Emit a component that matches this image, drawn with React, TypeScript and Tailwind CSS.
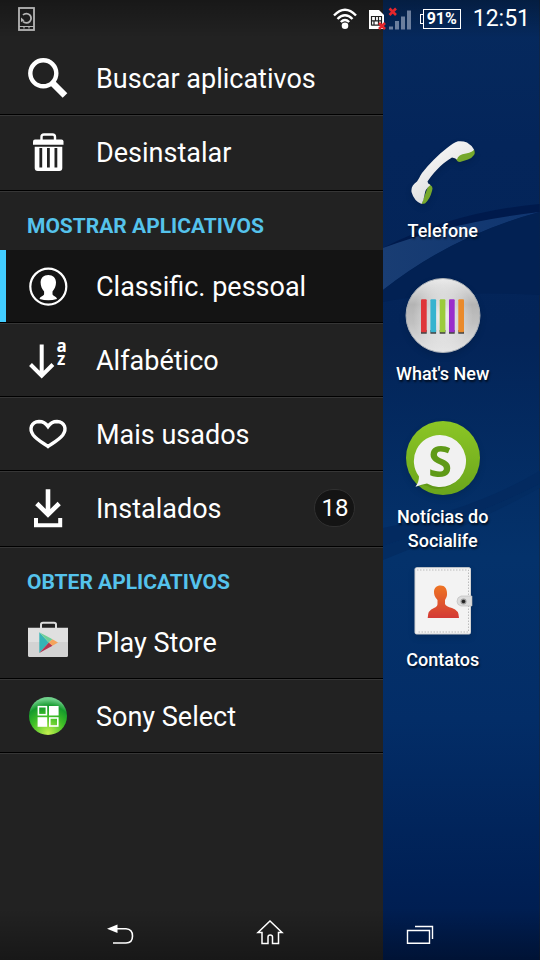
import React, { useState } from 'react';

const SearchIcon = () => (
  <svg viewBox="0 0 40 40" className="size-10 shrink-0" fill="none" stroke="#fff" aria-hidden="true">
    <circle cx="15.3" cy="15.3" r="13" strokeWidth="4.4" />
    <path d="M25 25.5 37 37.5" strokeWidth="6.5" />
  </svg>
);

const TrashIcon = () => (
  <svg viewBox="0 0 40 40" className="size-10 shrink-0" fill="#fff" aria-hidden="true">
    <path d="M13.5 8V5Q13.5 2.5 16 2.5H24.5Q27 2.5 27 5V8" fill="none" stroke="#fff" strokeWidth="2.4" />
    <path d="M5 12.8V9.5Q5 7.5 7 7.5H33.5Q35.5 7.5 35.5 9.5V12.8Z" />
    <path
      fillRule="evenodd"
      d="M6.7 14.7H34.3V36Q34.3 39 31.3 39H9.7Q6.7 39 6.7 36ZM11.4 16V35.5H14.2V16ZM19 16V35.5H21.8V16ZM26.5 16V35.5H29.3V16Z"
    />
  </svg>
);

const PersonIcon = () => (
  <svg viewBox="0 0 40 40" className="size-10 shrink-0" fill="#fff" aria-hidden="true">
    <circle cx="20.3" cy="20.6" r="18" fill="none" stroke="#fff" strokeWidth="2.2" />
    <path d="M20.3 9C25 9 28 12 28 16.5C28 20 26.5 23 24.5 25.5V28C24.5 30 28.5 30 29 33Q20.3 35.5 11.6 33C12 30 16.1 30 16.1 28V25.5C14 23 12.6 20 12.6 16.5C12.6 12 15.6 9 20.3 9Z" />
  </svg>
);

const SortIcon = () => (
  <svg viewBox="0 0 40 40" className="size-10 shrink-0 overflow-visible" fill="none" stroke="#fff" aria-hidden="true">
    <path d="M13.7 4.5V35M2.5 24.5 13.7 35.7 24.9 24.5" strokeWidth="4" />
    <g fill="#fff" stroke="none" fontFamily="Open Sans, sans-serif" fontWeight="700" fontSize="17">
      <text x="28.5" y="11.5">a</text>
      <text x="29" y="24.7">z</text>
    </g>
  </svg>
);

const HeartIcon = () => (
  <svg viewBox="0 0 40 40" className="size-10 shrink-0" fill="none" stroke="#fff" strokeWidth="3.4" aria-hidden="true">
    <path d="M20 32.5C16 29.5 9 26 5.2 21C1 15 3 8 11 7.5C15 7.5 18 9.5 20 12.5C22 9.5 25 7.5 29 7.5C37 8 39 15 34.8 21C31 26 24 29.5 20 32.5Z" />
  </svg>
);

const DownloadIcon = () => (
  <svg viewBox="0 0 40 40" className="size-10 shrink-0" fill="none" stroke="#fff" aria-hidden="true">
    <path d="M20 1.3V26M8.8 15.5 20 26.5 31.2 15.5" strokeWidth="4.6" />
    <path d="M8 30V37.3H32.2V30" strokeWidth="4" />
  </svg>
);

const PlayStoreIcon = () => (
  <svg viewBox="0 0 40 40" className="size-10 shrink-0 overflow-visible" aria-hidden="true">
    <path d="M13 6V2.5Q13 .7 15 .7H26Q28 .7 28 2.5V6" fill="none" stroke="#ddd" strokeWidth="2" />
    <path d="M0 5.7H40V33Q40 35 38 35H2Q0 35 0 33Z" fill="#e0e0e0" />
    <path d="M0 20H40V33Q40 35 38 35H2Q0 35 0 33Z" fill="#d3d3d3" />
    <path d="M11.3 10.3 20.8 20.5 11.3 31Z" fill="#35b3b5" />
    <path d="M11.3 10.3 24.5 17.3 20.8 20.5Z" fill="#6fcf97" />
    <path d="M11.3 31 20.8 20.5 24.5 23.8Z" fill="#b5344f" />
    <path d="M24.5 17.3 30 20.5 24.5 23.8 20.8 20.5Z" fill="#f5a35c" />
  </svg>
);

const SonySelectIcon = () => (
  <svg viewBox="0 0 40 40" className="size-10 shrink-0" aria-hidden="true">
    <defs>
      <radialGradient id="select-ball" cx=".5" cy=".95" r=".9">
        <stop offset="0" stopColor="#c4f04e" />
        <stop offset=".5" stopColor="#3fbf26" />
        <stop offset=".8" stopColor="#159a2c" />
        <stop offset="1" stopColor="#6fd08a" />
      </radialGradient>
    </defs>
    <circle cx="20" cy="20" r="19" fill="url(#select-ball)" />
    <g fill="none" stroke="#fff" strokeWidth="1.6">
      <rect x="10.4" y="10.7" width="8" height="8" />
      <rect x="21.8" y="22" width="8" height="8" />
    </g>
    <g fill="#fff">
      <rect x="21" y="10" width="9.6" height="9.5" />
      <rect x="9.6" y="21.2" width="9.6" height="9.6" />
    </g>
  </svg>
);

const PhoneIcon = () => (
  <svg viewBox="0 0 80 80" className="size-20 shrink-0 drop-shadow-md" aria-hidden="true">
    <defs>
      <linearGradient id="handset" x1="0" y1="0" x2=".6" y2="1">
        <stop offset="0" stopColor="#fff" />
        <stop offset=".5" stopColor="#ececec" />
        <stop offset="1" stopColor="#d5d8da" />
      </linearGradient>
    </defs>
    <path d="M55 21 71 16.5Q72.500 20 71 22Q69 25 65 26.500L57 29Q53.500 29 53 25Z" fill="#76a82c" />
    <path d="M26 51 29 53.500Q30 55 29 58Q27 66 22 70.500L18.500 71Z" fill="#76a82c" />
    <path
      d="M8.500 59C8 54 10 51.500 14 48.500C16 46 16.500 43.500 19 40C26 31 35 22 44 15Q50 10 55 8.300Q60 7.800 64 9.500Q69 12.500 71 16.500Q70 19 63 20.500Q55 21.500 54 26.500Q52 25 49 24.500C42 28.500 33 36 24.500 48.500Q24.500 50.500 27.500 52Q22 56 21.500 62Q20.500 68 18.500 71Q11 68 8.500 59Z"
      fill="url(#handset)"
    />
  </svg>
);

const WhatsNewIcon = () => (
  <svg viewBox="0 0 80 80" className="size-20 shrink-0 drop-shadow-md" aria-hidden="true">
    <defs>
      <linearGradient id="disc" x1="0" y1="0" x2="0" y2="1">
        <stop offset="0" stopColor="#ececec" />
        <stop offset=".35" stopColor="#b4b4b4" />
        <stop offset=".6" stopColor="#c0c0c0" />
        <stop offset="1" stopColor="#e6e6e6" />
      </linearGradient>
      <radialGradient id="disc-shine">
        <stop offset="0" stopColor="#fff" stopOpacity=".8" />
        <stop offset="1" stopColor="#fff" stopOpacity="0" />
      </radialGradient>
    </defs>
    <circle cx="40" cy="39.5" r="37" fill="url(#disc)" stroke="#a9afb5" strokeWidth="1" />
    <ellipse cx="40" cy="39.5" rx="30" ry="36" fill="url(#disc-shine)" />
    <path
      d="M18 54h5.7v3.8H18zM27.4 54h5.7v3.8h-5.7zM36.7 54h5.7v3.8h-5.7zM46 54h5.7v3.8H46zM55.3 54h5.7v3.8h-5.7z"
      fill="#444"
    />
    <rect x="18" y="23.3" width="5.7" height="33" rx="1" fill="#df3538" />
    <rect x="27.4" y="23.3" width="5.7" height="33" rx="1" fill="#36b3cf" />
    <rect x="36.7" y="23.3" width="5.7" height="33" rx="1" fill="#9bcb3c" />
    <rect x="46" y="23.3" width="5.7" height="33" rx="1" fill="#9a2ccb" />
    <rect x="55.3" y="23.3" width="5.7" height="33" rx="1" fill="#ea8a2b" />
  </svg>
);

const SocialifeIcon = () => (
  <svg viewBox="0 0 80 80" className="size-20 shrink-0 drop-shadow-md" aria-hidden="true">
    <defs>
      <linearGradient id="leaf" x1="0" y1="0" x2="0" y2="1">
        <stop offset="0" stopColor="#8cc625" />
        <stop offset="1" stopColor="#6aa51c" />
      </linearGradient>
    </defs>
    <circle cx="40" cy="39" r="37" fill="url(#leaf)" />
    <path d="M37 18a26 26 0 1 1-9 51Q24 66.5 20 66L12.5 68Q15.5 65 17 59A26 26 0 0 1 37 18Z" fill="#4d7f10" opacity=".4" />
    <path d="M37 16a26 26 0 1 1-13 48.5Q19 65.5 12.5 67.7Q16 63 16 57.5A26 26 0 0 1 37 16Z" fill="#f1f1f1" />
    <text x="37" y="57.5" textAnchor="middle" fontFamily="Open Sans, sans-serif" fontWeight="700" fontSize="43" fill="#5f9a17">
      S
    </text>
  </svg>
);

const ContactsIcon = () => (
  <svg viewBox="0 0 80 80" className="size-20 shrink-0 drop-shadow-md" aria-hidden="true">
    <defs>
      <linearGradient id="bust" x1="0" y1="0" x2="0" y2="1">
        <stop offset="0" stopColor="#ee7424" />
        <stop offset="1" stopColor="#d33a35" />
      </linearGradient>
    </defs>
    <rect x="12" y="5.7" width="55.5" height="66.3" rx="1.5" fill="#f3f3f3" stroke="#d4d4d4" />
    <path d="M14 8H65.5V70H14" fill="none" stroke="#bbb" strokeDasharray="1.5 1.5" />
    <path
      d="M37.5 23.5C42 23.5 44 27 44 31C44.5 34 43 36 42 38V42Q43 44.5 49 46Q56 48 56 56H24.7Q24.7 48 31 46Q34.5 44.5 34.5 42V38C31.5 35 31 32 31 30C31 26 33.5 23.5 37.5 23.5Z"
      fill="url(#bust)"
    />
    <path d="M69 34H58Q54 35 54 39.5Q54 43 58 44H69Z" fill="#dcdcdc" stroke="#b8b8b8" strokeWidth=".6" />
    <circle cx="60.5" cy="39.5" r="3" fill="#9a9a9a" />
    <circle cx="60.5" cy="39.5" r="1.8" fill="#222" />
  </svg>
);

const Wallpaper = () => (
  <svg viewBox="0 0 157 960" preserveAspectRatio="none" className="absolute inset-0 size-full" aria-hidden="true">
    <defs>
      <linearGradient id="sky" x1="0" y1="0" x2="0" y2="1">
        <stop offset="0" stopColor="#062a5e" />
        <stop offset=".15" stopColor="#04255a" />
        <stop offset=".35" stopColor="#032458" />
        <stop offset=".58" stopColor="#04326b" />
        <stop offset=".75" stopColor="#032d67" />
        <stop offset=".92" stopColor="#002055" />
        <stop offset="1" stopColor="#001b4c" />
      </linearGradient>
      <linearGradient id="wave" x1="0" y1="0" x2="1" y2="0">
        <stop offset="0" stopColor="#193d73" />
        <stop offset="1" stopColor="#0f3570" />
      </linearGradient>
    </defs>
    <rect width="157" height="960" fill="url(#sky)" />
    <path d="M0 248Q70 212 157 204V212Q70 225 0 248Z" fill="#001a4c" />
    <path d="M0 248Q70 222 157 212Q70 235 0 290Z" fill="url(#wave)" />
    <path d="M0 290Q70 235 157 212V295Q60 290 0 302Z" fill="#022153" />
    <path d="M0 528Q90 510 157 471V484Q90 518 0 546Z" fill="#032a60" />
    <path d="M0 546Q90 518 157 484V488Q90 525 0 560Z" fill="#032c62" />
  </svg>
);

const actions = [
  { label: 'Buscar aplicativos', icon: SearchIcon },
  { label: 'Desinstalar', icon: TrashIcon, last: true },
];

const sortModes = [
  { id: 'personal', label: 'Classific. pessoal', icon: PersonIcon },
  { id: 'alpha', label: 'Alfabético', icon: SortIcon },
  { id: 'used', label: 'Mais usados', icon: HeartIcon },
  { id: 'installed', label: 'Instalados', icon: DownloadIcon, count: 18, last: true },
];

const stores = [
  { label: 'Play Store', icon: PlayStoreIcon },
  { label: 'Sony Select', icon: SonySelectIcon },
];

const shortcuts = [
  { label: 'Telefone', icon: PhoneIcon },
  { label: "What's New", icon: WhatsNewIcon },
  { label: 'Notícias do Socialife', icon: SocialifeIcon },
  { label: 'Contatos', icon: ContactsIcon },
];

const DrawerRow = ({ item, active = false, onClick }: any) => {
  const Icon = item.icon;
  return (
    <li className="border-b border-[#363636]">
      <button
        onClick={onClick}
        className={`flex w-full border-b border-black text-left ${active ? 'bg-[#141414]' : ''} ${item.last ? 'pb-0.5' : ''}`}
      >
        <span className={`w-1.5 shrink-0 ${active ? 'bg-[#42cdff]' : ''}`} />
        <span className="flex h-[72px] grow items-center gap-7 pr-7 pl-[22px]">
          <Icon />
          <span className="grow pt-0.5 text-[27px] leading-8 whitespace-nowrap">{item.label}</span>
          {item.count && (
            <span className="flex h-[38px] w-[41px] items-center justify-center rounded-full border border-[#303030] bg-[#141414] text-2xl">
              {item.count}
            </span>
          )}
        </span>
      </button>
    </li>
  );
};

const SectionTitle = ({ children }: any) => (
  <h2 className="flex h-[58px] items-center pt-2.5 pl-[27px] text-[21px] leading-6 font-bold text-[#55c3ec]">{children}</h2>
);

const App = () => {
  const [sort, setSort] = useState('personal');

  return (
    <div className="grid min-h-screen grid-cols-[71fr_29fr] grid-rows-[38px_1fr_52px] bg-[#222] font-['Roboto',sans-serif] text-white">
      <aside className="col-start-1 row-span-3 row-start-1 bg-[#222] pt-[42px]">
        <ul>
          {actions.map((item) => (
            <DrawerRow key={item.label} item={item} />
          ))}
        </ul>
        <SectionTitle>MOSTRAR APLICATIVOS</SectionTitle>
        <ul>
          {sortModes.map((item) => (
            <DrawerRow key={item.id} item={item} active={item.id === sort} onClick={() => setSort(item.id)} />
          ))}
        </ul>
        <SectionTitle>OBTER APLICATIVOS</SectionTitle>
        <ul>
          {stores.map((item) => (
            <DrawerRow key={item.label} item={item} />
          ))}
        </ul>
      </aside>

      <main className="relative col-start-2 row-span-3 row-start-1 overflow-hidden">
        <Wallpaper />
        <div className="relative pt-[133px] pr-[38px]">
          {shortcuts.map(({ label, icon: Icon }) => (
            <a key={label} href="#" className="flex h-[143px] flex-col items-center gap-1.5 px-2">
              <Icon />
              <span className="text-center text-lg leading-6 font-medium text-shadow-[1px_2px_2px_#000a]">{label}</span>
            </a>
          ))}
        </div>
      </main>

      {/* Status bar */}
      <header className="relative col-span-2 col-start-1 row-start-1 flex items-center bg-linear-to-b from-black/30 to-transparent pr-2.5 pl-[18px]">
        <svg viewBox="0 0 17 24" className="h-6 w-[17px]" fill="none" stroke="#b5b5b5" aria-hidden="true">
          <rect x="1" y="1" width="15" height="22" strokeWidth="1.8" />
          <path d="M1 19.5H16M6 21.5V20M11 21.5V20" strokeWidth="1.2" />
          <path d="M5 14.5A4.7 4.7 0 1 0 5 8" strokeWidth="1.8" />
          <path d="M3 10.5 6.5 13.5 3 15Z" fill="#b5b5b5" stroke="none" />
        </svg>
        <svg viewBox="0 0 24 22" className="ml-auto h-[22px] w-6" fill="none" stroke="#fff" strokeWidth="2.4" aria-hidden="true">
          <path d="M1 7.5Q12 -4 23 7.5M4.5 11Q12 3.5 19.5 11M7.8 14Q12 10 16.2 14" />
          <circle cx="12" cy="17.8" r="3.3" fill="#fff" stroke="none" />
        </svg>
        <svg viewBox="0 0 43 24" className="ml-3 h-6 w-[43px]" aria-hidden="true">
          <path d="M0 3H10L15 8V22H0Z" fill="#fff" />
          <path d="M2.5 9.5H12.5M2.5 13.8H12.5M2.5 18.2H12.5M6.5 9.5V13.8M5 13.8V18.2M9.5 9.5V18.2M2.500 9V18.500M12.500 9V18.500" stroke="#222" strokeWidth="1.2" />
          <path d="M10 16 16 22M16 16 10 22M20.5 1.5 27 8M27 1.500 20.500 8" stroke="#e5262b" strokeWidth="2.6" />
          <path d="M20 19.5h4V22.5h-4zM26 14h4v8.5h-4zM32 9.5h4v13h-4zM38 3.5h4v19h-4z" fill="#8495b0" opacity=".8" />
        </svg>
        <div className="ml-2 flex items-center">
          <span className="-mr-px h-2.5 w-1 border border-r-0 border-white" />
          <span className="flex h-5 w-[38px] items-center justify-center border border-white text-base leading-4 font-bold">91%</span>
        </div>
        <time className="ml-3 text-[23px] leading-7">12:51</time>
      </header>

      {/* Navigation bar */}
      <nav className="relative col-span-2 col-start-1 row-start-3 flex items-center justify-center bg-linear-to-b from-transparent to-black/30">
        <button aria-label="Voltar" className="flex w-[150px] justify-center">
          <svg viewBox="0 0 28 28" className="size-7" fill="none" stroke="#fff" strokeWidth="1.6">
            <path d="M11 8.7H20Q26.5 9 26.5 16Q26.5 23 20 23H7" />
            <path d="M1 8.7 11.5 4.5V13Z" fill="#fff" stroke="none" />
          </svg>
        </button>
        <button aria-label="Início" className="flex w-[150px] justify-center">
          <svg viewBox="0 0 28 28" className="size-7" fill="none" stroke="#fff" strokeWidth="1.5">
            <path d="M14 1 26 12.5H22.5V23.5H16.5V17Q16.5 15 14.2 15Q12 15 12 17V23.5H6V12.5H2Z" />
          </svg>
        </button>
        <button aria-label="Recentes" className="flex w-[150px] justify-center">
          <svg viewBox="0 0 28 28" className="size-7" fill="none" stroke="#fff" strokeWidth="1.4">
            <path d="M1.5 10.5H23.5V23.3H1.5ZM9 6.5H26.5V19" />
          </svg>
        </button>
      </nav>
    </div>
  );
};

export default App;
